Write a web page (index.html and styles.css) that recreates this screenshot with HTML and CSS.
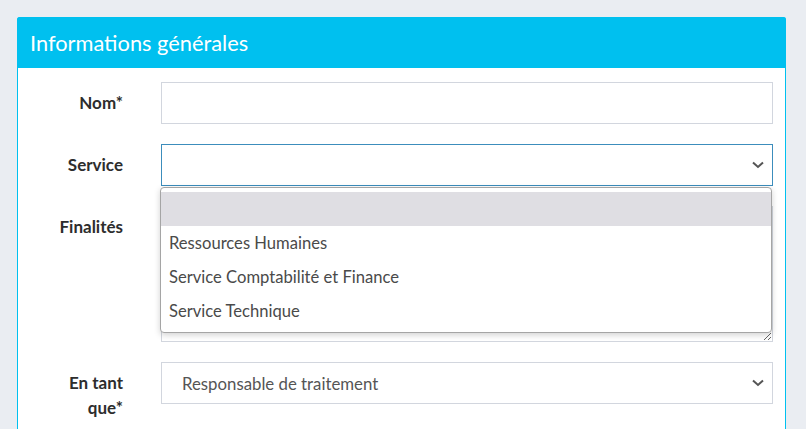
FILE: index.html
```html
<!DOCTYPE html>
<html lang="fr">
<head>
<meta charset="utf-8">
<link rel="stylesheet" href="styles.css">
</head>
<body>
<div class="card">
  <div class="card-header">Informations générales</div>
  <div class="card-body">
    <div class="row">
      <label class="label">Nom*</label>
      <div class="control"><div class="input"></div></div>
    </div>
    <div class="row">
      <label class="label">Service</label>
      <div class="control">
        <div class="select focused">
          <span></span>
          <svg class="chev" width="12" height="8" viewBox="0 0 12 8"><path d="M1 1.5 L6 6 L11 1.5" fill="none" stroke="#555" stroke-width="2"/></svg>
        </div>
        <ul class="dropdown">
          <li class="opt active">&nbsp;</li>
          <li class="opt">Ressources Humaines</li>
          <li class="opt">Service Comptabilité et Finance</li>
          <li class="opt">Service Technique</li>
        </ul>
      </div>
    </div>
    <div class="row">
      <label class="label label-top">Finalités</label>
      <div class="control"><textarea class="textarea"></textarea></div>
    </div>
    <div class="row">
      <label class="label label-two">En tant<br>que*</label>
      <div class="control">
        <div class="select">
          <span class="sel-text">Responsable de traitement</span>
          <svg class="chev" width="12" height="8" viewBox="0 0 12 8"><path d="M1 1.5 L6 6 L11 1.5" fill="none" stroke="#555" stroke-width="2"/></svg>
        </div>
      </div>
    </div>
  </div>
</div>
</body>
</html>
```
FILE: styles.css
```css
* { box-sizing: border-box; }
html, body { margin: 0; padding: 0; }
body {
  background: #eaedf2;
  font-family: "Source Sans Pro", Lato, "Liberation Sans", sans-serif;
  color: #333;
  padding: 17px 20px 0 17px;
  height: 429px;
  overflow: hidden;
}
.card {
  width: 769px;
  background: #fff;
  border: 1px solid #00c0ef;
  border-bottom: none;
  border-radius: 3px 3px 0 0;
  height: 420px;
}
.card-header {
  background: #00c0ef;
  color: #fff;
  height: 51px;
  font-size: 21.8px;
  line-height: 51px;
  padding-left: 13px;
  margin: -1px -1px 0 -1px;
  border-radius: 3px 3px 0 0;
}
.card-body {
  padding: 14px 12px 0 0;
  display: flex;
  flex-direction: column;
  gap: 20px;
}
.row {
  display: grid;
  grid-template-columns: 105px 1fr;
  column-gap: 38px;
}
.label {
  font-weight: 700;
  font-size: 17px;
  text-align: right;
  line-height: 42px;
  color: #2d2d2d;
}
.label-top { line-height: 24px; padding-top: 9px; }
.label-two { line-height: 25px; padding-top: 8px; }
.control { position: relative; }
.input {
  height: 42px;
  border: 1px solid #d2d6de;
}
.select {
  height: 42px;
  border: 1px solid #d2d6de;
  display: flex;
  align-items: center;
  justify-content: space-between;
  padding: 0 8px 0 20px;
  font-size: 16.8px;
  color: #555;
}
.select.focused { border-color: #3c8dbc; }
.chev { display: block; }
.textarea {
  display: block;
  width: 100%;
  height: 136px;
  border: 1px solid #d2d6de;
  margin: 0;
  resize: vertical;
  font-family: inherit;
}
.dropdown {
  position: absolute;
  left: -1px;
  top: 43px;
  width: 612px;
  margin: 0;
  padding: 4px 0 4px 0;
  list-style: none;
  background: #fff;
  border: 1px solid #a5a5a5;
  border-radius: 4px;
  box-shadow: 0 2px 6px rgba(0,0,0,0.18);
  z-index: 2;
}
.opt {
  height: 34px;
  line-height: 34px;
  padding-left: 8px;
  font-size: 16.6px;
  color: #4a4a4a;
}
.opt.active { background: #dfdee3; }
```
